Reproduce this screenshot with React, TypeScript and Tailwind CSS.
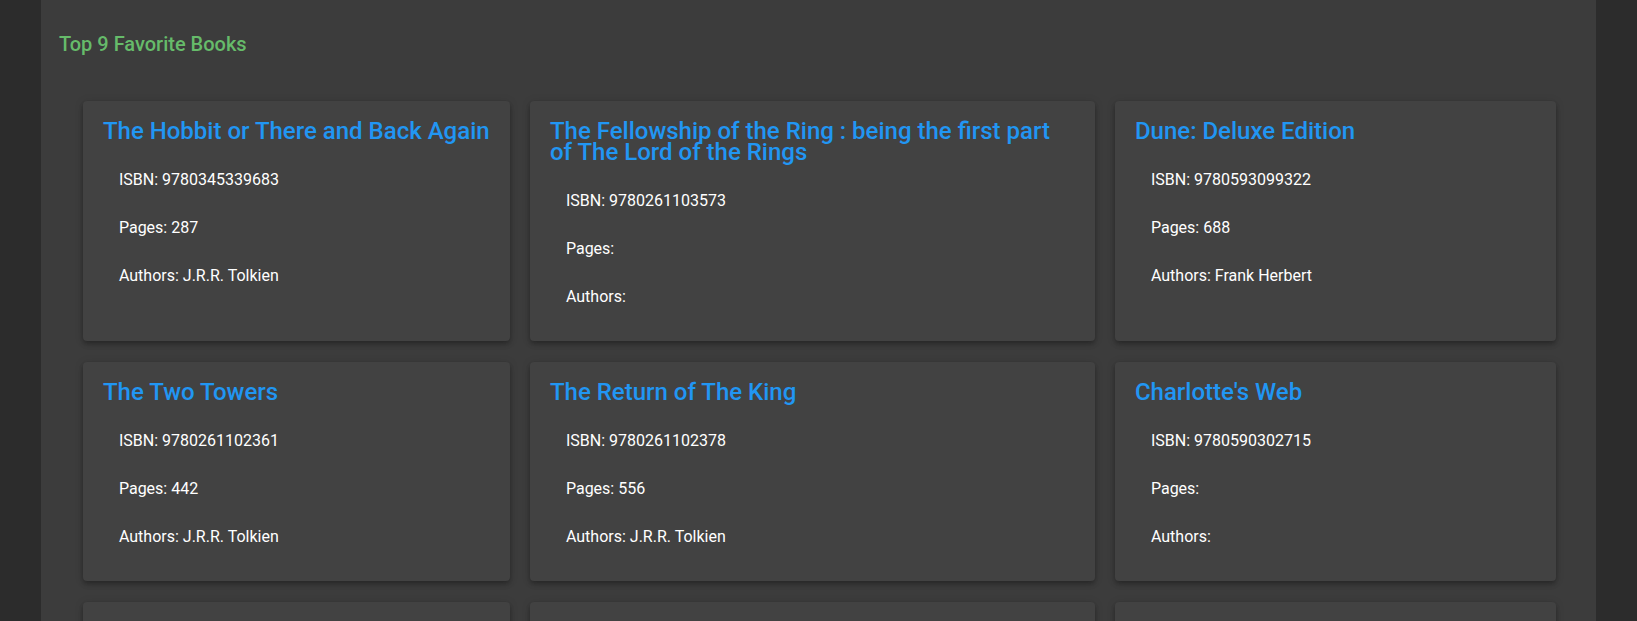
import React from 'react';

type Book = {
  title: string;
  isbn: string;
  pages?: number;
  authors?: string;
};

const books: Book[] = [
  { title: 'The Hobbit or There and Back Again', isbn: '9780345339683', pages: 287, authors: 'J.R.R. Tolkien' },
  { title: 'The Fellowship of the Ring : being the first part of The Lord of the Rings', isbn: '9780261103573' },
  { title: 'Dune: Deluxe Edition', isbn: '9780593099322', pages: 688, authors: 'Frank Herbert' },
  { title: 'The Two Towers', isbn: '9780261102361', pages: 442, authors: 'J.R.R. Tolkien' },
  { title: 'The Return of The King', isbn: '9780261102378', pages: 556, authors: 'J.R.R. Tolkien' },
  { title: "Charlotte's Web", isbn: '9780590302715' },
  { title: 'Matilda', isbn: '9780142410370', pages: 240, authors: 'Roald Dahl' },
  { title: 'The Hunger Games', isbn: '9780439023481', pages: 374, authors: 'Suzanne Collins' },
  { title: "Harry Potter and the Sorcerer's Stone", isbn: '9780590353403', pages: 309, authors: 'J.K. Rowling' },
];

const BookCard: React.FC<{ book: Book }> = ({ book }) => (
  <div className="bg-[#424242] rounded-[4px] p-5 shadow-[0_2px_4px_-1px_rgba(0,0,0,0.2),0_4px_5px_0_rgba(0,0,0,0.14),0_1px_10px_0_rgba(0,0,0,0.12)]">
    <h2 className="text-[#2196f3] text-2xl leading-[21px] font-medium mb-[14px]">{book.title}</h2>
    <ul className="pl-4 text-white text-base leading-6">
      <li className="py-3">ISBN: {book.isbn}</li>
      <li className="py-3">Pages: {book.pages ?? ''}</li>
      <li className="py-3">Authors: {book.authors ?? ''}</li>
    </ul>
  </div>
);

export default function App() {
  return (
    <div className="min-h-screen bg-[#2c2c2c] font-['Roboto',sans-serif]">
      <div className="w-[95%] mx-auto bg-[#3c3c3c] min-h-screen pt-[32px] pb-10">
        <h1 className="pl-[18px] text-[#66bb6a] text-xl leading-6 font-medium">Top 9 Favorite Books</h1>
        <div className="mt-[45px] ml-[42px] mr-[41px] grid grid-cols-[427px_565px_441px] gap-x-5 gap-y-[21px] items-stretch">
          {books.map((b) => (
            <BookCard key={b.isbn} book={b} />
          ))}
        </div>
      </div>
    </div>
  );
}
